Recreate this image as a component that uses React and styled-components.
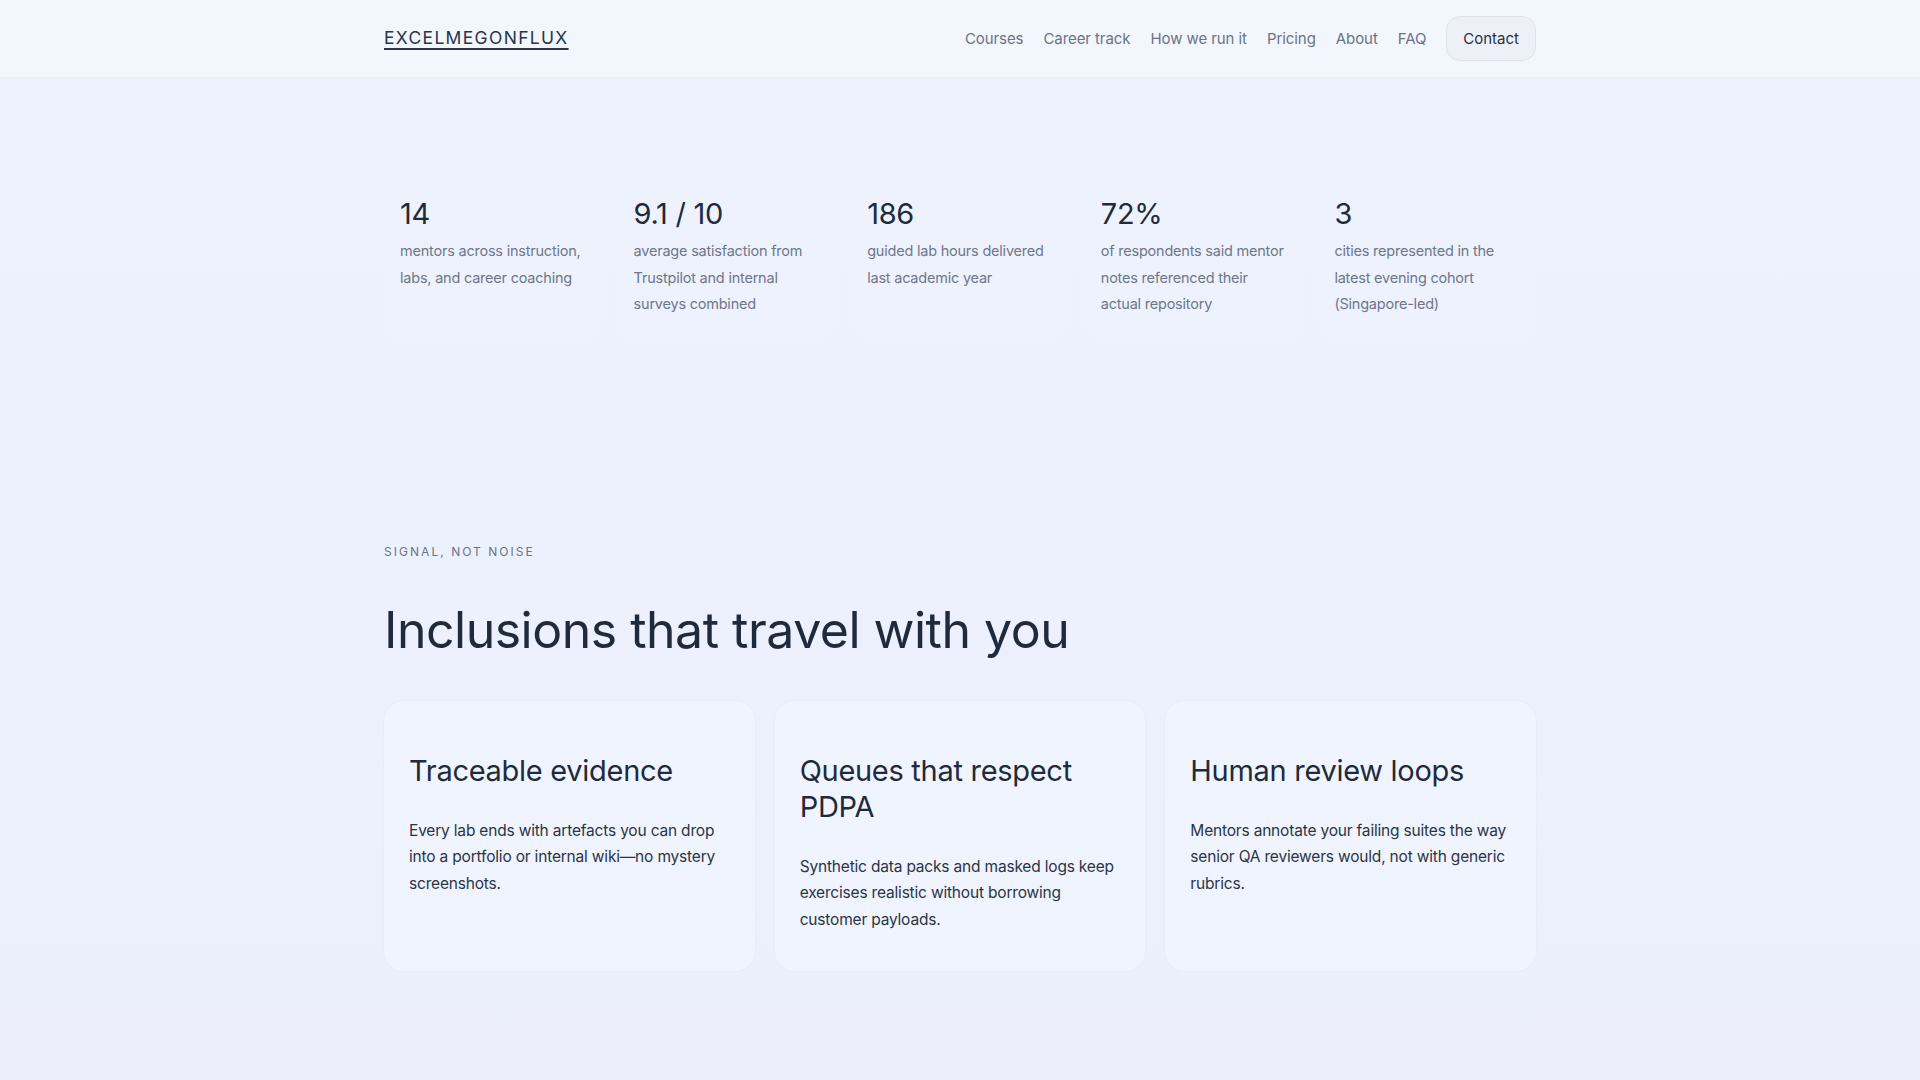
import React from 'react'
import styled, {createGlobalStyle} from 'styled-components'

const GlobalStyle = createGlobalStyle`
    html, body {
        margin: 0;
        padding: 0;
    }
    body {
        font-family: Inter, "Noto Sans", "Liberation Sans", sans-serif;
        background: linear-gradient(180deg, #edf3fe 0%, #ebf1fd 50%, #eceffb 100%);
        color: #1f2937;
        min-height: 100vh;
    }
    * { box-sizing: border-box; }
`

const Header = styled.header`
    height: 78px;
    background: #f2f6fd;
    border-bottom: 1px solid #eaf0fb;
`

const Container = styled.div`
    width: 1152px;
    margin: 0 auto;
`

const NavBar = styled(Container)`
    height: 100%;
    display: flex;
    align-items: center;
    justify-content: space-between;
`

const Logo = styled.a`
    font-size: 17.5px;
    letter-spacing: 0.075em;
    color: #2b3448;
    text-decoration: underline;
    text-underline-offset: 4px;
    text-decoration-thickness: 2px;
    margin-top: -2px;
`

const Links = styled.nav`
    display: flex;
    align-items: center;
    gap: 20px;
`

const NavLink = styled.a`
    font-size: 15px;
    letter-spacing: -0.005em;
    color: #6b7385;
`

const ContactButton = styled.button`
    font-family: inherit;
    font-size: 15px;
    color: #283142;
    background: #edf1f7;
    border: 1px solid #dde3ec;
    border-radius: 14px;
    height: 45px;
    padding: 0 16px;
`

const StatsSection = styled.section`
    padding: 94px 0 0;
`

const StatsGrid = styled(Container)`
    display: grid;
    grid-template-columns: repeat(5, 1fr);
    gap: 16px;
`

const StatCard = styled.div`
    padding: 24px 16px 24px;
    border-radius: 18px;
    background: rgba(255, 255, 255, 0.05);
`

const StatValue = styled.div`
    font-size: 29px;
    line-height: 36px;
    color: #1f2a3c;
    font-weight: 400;
    letter-spacing: -0.01em;
`

const StatText = styled.p`
    margin: 6px 0 0;
    font-size: 14.5px;
    line-height: 26.5px;
    letter-spacing: -0.015em;
    color: #6f778a;
`

const InclusionsSection = styled.section`
    padding: 202px 0 0;
`

const Eyebrow = styled.div`
    font-size: 12px;
    letter-spacing: 0.17em;
    color: #6b7385;
    text-transform: uppercase;
`

const Heading = styled.h2`
    margin: 40px 0 40px;
    font-size: 50px;
    line-height: 62px;
    font-weight: 400;
    color: #1f2a3c;
    letter-spacing: -0.01em;
`

const CardGrid = styled(Container)`
    display: grid;
    grid-template-columns: repeat(3, 1fr);
    gap: 20px;
`

const Card = styled.article`
    padding: 52px 25px 38px;
    border-radius: 20px;
    background: rgba(241, 245, 255, 0.7);
    box-shadow: 0 0 0 1px rgba(228, 234, 248, 0.5);
`

const CardTitle = styled.h3`
    margin: 0;
    font-size: 29px;
    line-height: 36px;
    font-weight: 400;
    color: #1f2a3c;
    letter-spacing: -0.01em;
`

const CardText = styled.p`
    margin: 29px 0 0;
    font-size: 15.5px;
    line-height: 26.5px;
    letter-spacing: -0.012em;
    color: #2b3445;
`

const navItems = ['Courses', 'Career track', 'How we run it', 'Pricing', 'About', 'FAQ']

const stats = [
    {value: '14', text: 'mentors across instruction, labs, and career coaching'},
    {value: '9.1 / 10', text: 'average satisfaction from Trustpilot and internal surveys combined'},
    {value: '186', text: 'guided lab hours delivered last academic year'},
    {value: '72%', text: 'of respondents said mentor notes referenced their actual repository'},
    {value: '3', text: 'cities represented in the latest evening cohort (Singapore-led)'},
]

const inclusions = [
    {title: 'Traceable evidence', text: 'Every lab ends with artefacts you can drop into a portfolio or internal wiki—no mystery screenshots.'},
    {title: 'Queues that respect PDPA', text: 'Synthetic data packs and masked logs keep exercises realistic without borrowing customer payloads.'},
    {title: 'Human review loops', text: 'Mentors annotate your failing suites the way senior QA reviewers would, not with generic rubrics.'},
]

const App = () => {
    return (
        <>
            <GlobalStyle />
            <Header>
                <NavBar>
                    <Logo>EXCELMEGONFLUX</Logo>
                    <Links>
                        {navItems.map(item => <NavLink key={item}>{item}</NavLink>)}
                        <ContactButton>Contact</ContactButton>
                    </Links>
                </NavBar>
            </Header>
            <StatsSection>
                <StatsGrid>
                    {stats.map(s => (
                        <StatCard key={s.value}>
                            <StatValue>{s.value}</StatValue>
                            <StatText>{s.text}</StatText>
                        </StatCard>
                    ))}
                </StatsGrid>
            </StatsSection>
            <InclusionsSection>
                <Container>
                    <Eyebrow>Signal, not noise</Eyebrow>
                    <Heading>Inclusions that travel with you</Heading>
                </Container>
                <CardGrid>
                    {inclusions.map(c => (
                        <Card key={c.title}>
                            <CardTitle>{c.title}</CardTitle>
                            <CardText>{c.text}</CardText>
                        </Card>
                    ))}
                </CardGrid>
            </InclusionsSection>
        </>
    )
}

export default App
